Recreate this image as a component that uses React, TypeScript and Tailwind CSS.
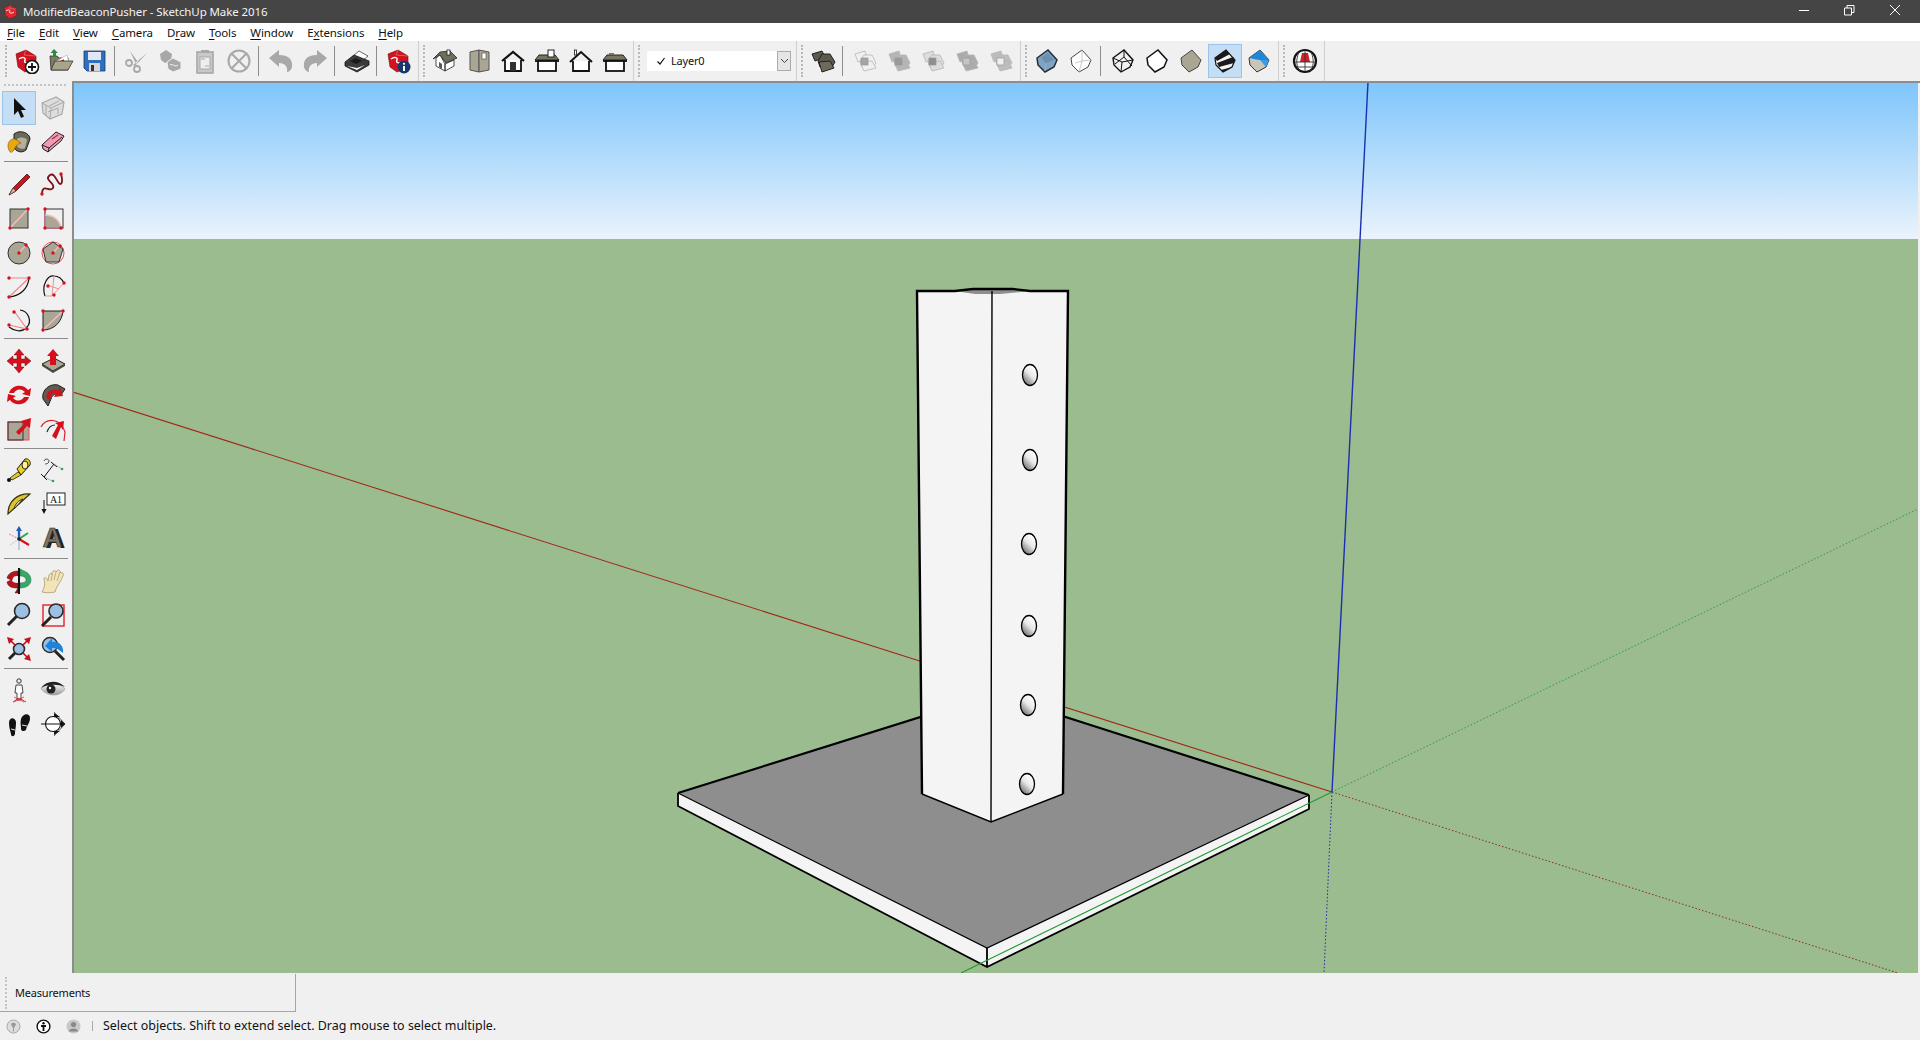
import type { ReactNode } from "react";

const RED = "#d4111e";
const TAN = "#a9a693";
const DARK = "#2b2b28";
const GREY = "#a8a8a8";

function Ico({ children, size = 26 }: { children: ReactNode; size?: number }) {
  return (
    <svg width={size} height={size} viewBox="0 0 26 26" fill="none">
      {children}
    </svg>
  );
}

function Dot({ x, y }: { x: number; y: number }) {
  return <circle cx={x} cy={y} r={1.7} fill={RED} />;
}

function Logo({ fill = RED }: { fill?: string }) {
  return (
    <g>
      <path d="M2 6 L12 2 L22 8 L22 19 L11 24 L4 19 Z" fill={fill} stroke="#6d0c12" strokeWidth={0.6} />
      <path d="M5 11 C9 8 12 10 11 12 C9 15 14 16 18 13" stroke="#fff" strokeWidth={1.4} />
      <path d="M12 2 L10 7 L22 8" stroke="#fff" strokeWidth={0.5} opacity={0.6} />
    </g>
  );
}

const NewIcon = () => (
  <Ico>
    <Logo />
    <circle cx={18} cy={19} r={6.5} fill="#fff" stroke="#111" strokeWidth={1.6} />
    <path d="M18 15 V23 M14 19 H22" stroke="#111" strokeWidth={1.8} />
  </Ico>
);
const InfoIcon = () => (
  <Ico>
    <Logo />
    <circle cx={18} cy={19} r={6.5} fill="#17386e" />
    <circle cx={18} cy={15.8} r={1.1} fill="#fff" />
    <path d="M18 18 V23" stroke="#fff" strokeWidth={2} />
  </Ico>
);
const OpenIcon = () => (
  <Ico>
    <path d="M2 8 L9 8 L11 10 L20 10 L20 22 L3 22 Z" fill="#7d7a62" stroke="#333" strokeWidth={0.8} />
    <path d="M8 13 L19 7 L21 15 L10 20 Z" fill="#fff" stroke="#999" strokeWidth={0.5} />
    <path d="M12 14 L16 12" stroke={RED} strokeWidth={1.4} />
    <path d="M3 22 L7 13 L25 13 L20 22 Z" fill="#a9a58a" stroke="#333" strokeWidth={0.8} />
    <path d="M6 1 L10 5 L8 5 L8 9 L5 9 L5 5 L2.5 5 Z" fill="#2d8a3e" />
  </Ico>
);
const SaveIcon = () => (
  <Ico>
    <path d="M2 3 L23 3 L23 23 L5 23 L2 20 Z" fill="#2f6fc0" stroke="#17386e" strokeWidth={0.8} />
    <rect x={6} y={4} width={13} height={8} fill="#dfe8f2" />
    <rect x={7} y={15} width={11} height={8} fill="#d5d5d5" />
    <rect x={9} y={17} width={3} height={6} fill="#333" />
  </Ico>
);
const CutIcon = () => (
  <Ico>
    <path d="M6 3 L14 14 L12 16 Z M23 5 L9 17 L11 18 Z" fill={GREY} />
    <circle cx={5} cy={15} r={3} stroke={GREY} strokeWidth={1.8} />
    <circle cx={13} cy={21} r={3} stroke={GREY} strokeWidth={1.8} />
  </Ico>
);
const CopyIcon = () => (
  <Ico>
    <path d="M2 6 L8 2 L14 6 L13 13 L7 15 L3 12 Z" fill={GREY} />
    <path d="M9 14 L15 10 L23 14 L23 21 L15 24 L10 21 Z" fill={GREY} stroke="#f0f0f0" />
    <path d="M12 17 C15 15 17 20 20 17" stroke="#f0f0f0" />
  </Ico>
);
const PasteIcon = () => (
  <Ico>
    <rect x={5} y={4} width={16} height={21} fill="#c9c9c9" stroke={GREY} strokeWidth={1.6} />
    <rect x={9} y={2} width={8} height={3} fill={GREY} />
    <rect x={8} y={9} width={10} height={12} fill="#eee" stroke={GREY} />
    <path d="M9 11 L13 11 M13 18 L17 18" stroke={GREY} />
  </Ico>
);
const EraseIcon = () => (
  <Ico>
    <circle cx={13} cy={13} r={10.5} stroke={GREY} strokeWidth={2} />
    <path d="M6 6 L20 20 M20 6 L6 20" stroke={GREY} strokeWidth={2} />
  </Ico>
);
const UndoIcon = () => (
  <Ico>
    <path d="M1 10 L11 2 L11 7 C20 7 25 11 24 19 C23 23 20 24 19 24 C20 19 17 15 11 15 L11 19 Z" fill={GREY} />
  </Ico>
);
const RedoIcon = () => (
  <Ico>
    <path d="M25 10 L15 2 L15 7 C6 7 1 11 2 19 C3 23 6 24 7 24 C6 19 9 15 15 15 L15 19 Z" fill={GREY} />
  </Ico>
);
const PrintIcon = () => (
  <Ico>
    <path d="M8 9 L15 3 L24 8 L17 14 Z" fill="#fff" stroke="#444" strokeWidth={0.8} />
    <path d="M1 14 L10 7 L25 13 L25 17 L13 24 L1 18 Z" fill="#3b3b3b" stroke="#111" strokeWidth={0.8} />
    <path d="M3 18 L13 22 L21 17 L13 20 Z" fill="#fff" />
    <path d="M6 13 L12 10 L18 13 L12 16 Z" fill="#1c1c1c" />
  </Ico>
);

const IsoHouse = () => (
  <Ico>
    <path d="M1 11 L8 4 L18 3 L25 10 L14 15 L8 7 Z" fill="#6f6d5b" stroke="#222" strokeWidth={0.8} />
    <path d="M4 10 L8 7 L13 16 L13 23 L4 18 Z M13 16 L22 12 L22 18 L13 23 Z" fill="#fff" stroke="#222" strokeWidth={0.8} />
    <path d="M7 14 L10 16 L10 21 L7 19 Z" fill="#555" />
    <rect x={15} y={2} width={3} height={5} fill="#fff" stroke="#222" strokeWidth={0.8} />
  </Ico>
);
const SideView = () => (
  <Ico>
    <path d="M4 4 L13 2 L13 24 L4 22 Z" fill={TAN} stroke="#555" />
    <path d="M13 2 L23 4 L23 22 L13 24 Z" fill={TAN} stroke="#555" />
    <rect x={16} y={5} width={4} height={6} fill="#fff" stroke="#555" strokeWidth={0.7} />
  </Ico>
);
const FrontHouse = () => (
  <Ico>
    <path d="M5 12 V23 H21 V12" stroke="#111" strokeWidth={1.8} fill="#fff" />
    <path d="M2 13 L13 4 L24 13" stroke="#111" strokeWidth={2.2} />
    <rect x={10} y={14} width={6} height={9} fill="#333" />
  </Ico>
);
const RoofTop = ({ chimney }: { chimney?: boolean }) => (
  <Ico>
    <path d="M1 12 L5 7 L21 7 L25 12 Z" fill="#77745f" stroke="#222" />
    <path d="M1 13 H25" stroke="#111" strokeWidth={1.8} />
    <rect x={4} y={13} width={18} height={10} fill="#fff" stroke="#111" strokeWidth={1.8} />
    {chimney ? (
      <rect x={14} y={2} width={6} height={7} fill="#fff" stroke="#222" />
    ) : (
      <rect x={7} y={5} width={5} height={2} fill="#77745f" />
    )}
  </Ico>
);
const BackHouse = () => (
  <Ico>
    <path d="M5 13 V23 H21 V13" fill="#fff" stroke="#111" strokeWidth={1.8} />
    <path d="M2 14 L13 4 L24 14" stroke="#111" strokeWidth={2} />
    <rect x={6.5} y={2} width={2} height={5} fill="#fff" stroke="#111" strokeWidth={0.8} />
  </Ico>
);

const OutlinerIcon = () => (
  <Ico>
    <path d="M2 6 L12 3 L15 9 L5 13 Z" fill="#5b5a4c" stroke="#222" />
    <path d="M12 6 L20 6 L25 14 L22 19 L10 19 L8 13 Z" fill="#5b5a4c" stroke="#222" />
    <path d="M9 14 L20 13 L24 20 L12 24 Z" fill="#6d6b5b" stroke="#222" />
  </Ico>
);
const Boxes = ({ fill, inner }: { fill: string; inner: string }) => (
  <Ico>
    <path d="M3 6 L13 3 L15 10 L6 14 Z" fill={fill} stroke="#b5b5b5" strokeWidth={0.8} />
    <path d="M12 7 L20 7 L24 15 L21 19 L10 19 L8 13 Z" fill={fill} stroke="#b5b5b5" strokeWidth={0.8} />
    <path d="M8 14 L20 13 L24 20 L12 23 Z" fill={fill} stroke="#b5b5b5" strokeWidth={0.8} />
    <rect x={9} y={10} width={7} height={7} fill={inner} stroke="#999" strokeWidth={0.7} />
  </Ico>
);

const cubeOuter = "M3 10 L14 2 L23 12 L20 19 L11 24 L4 17 Z";
const XrayCube = () => (
  <Ico>
    <path d={cubeOuter} fill="#7fa3c0" stroke="#1f2f3d" strokeWidth={1.5} />
    <path d="M7 10 L14 5 L20 12 L12 15 Z" fill="#6b90ad" />
    <path d="M12 15 L11 23" stroke="#8fb0c8" />
  </Ico>
);
const BackCube = () => (
  <Ico>
    <path d={cubeOuter} fill="#fff" stroke="#444" strokeWidth={1} />
    <path d="M7 15 L14 13 L23 12 M14 13 L14 2 M14 13 L11 24" stroke="#bbb" strokeWidth={0.8} />
  </Ico>
);
const WireCube = () => (
  <Ico>
    <path d={cubeOuter} stroke="#111" strokeWidth={1.4} />
    <path d="M3 10 L12 14 L23 12 M12 14 L11 24 M5 16 L14 9 L22 18 M14 2 L14 9" stroke="#111" strokeWidth={1} />
  </Ico>
);
const HiddenCube = () => (
  <Ico>
    <path d={cubeOuter} fill="#fff" stroke="#111" strokeWidth={1.5} />
  </Ico>
);
const ShadedCube = () => (
  <Ico>
    <path d={cubeOuter} fill={TAN} stroke="#444" strokeWidth={1} />
  </Ico>
);
const TexturedCube = () => (
  <Ico>
    <path d={cubeOuter} fill="#f4f4f4" stroke="#111" strokeWidth={1.2} />
    <path d="M3 10 L14 2 L18 6 L5 13 Z M5 15 L21 9 L23 12 L22 15 L7 19 Z M9 22 L20 19 L11 24 Z" fill="#1a1a1a" />
  </Ico>
);
const MonoCube = () => (
  <Ico>
    <path d={cubeOuter} fill="#c8c6b8" stroke="#333" strokeWidth={1} />
    <path d="M3 10 L14 2 L23 12 L13 12 Z" fill="#1f86d9" />
    <path d="M14 12 L23 12 L20 19 Z" fill="#3a9be6" />
  </Ico>
);
const GlobeIcon = () => (
  <Ico>
    <circle cx={13} cy={13} r={11} fill="#fff" stroke="#111" strokeWidth={2.2} />
    <path d="M10 5 L16 5 L18 14 L8 14 Z" fill="#d21f2d" />
    <path d="M2 14 H24 M3 19 H23 M13 2 V24 M7 4 C3 13 5 20 8 23 M19 4 C23 13 21 20 18 23" stroke="#333" strokeWidth={0.9} />
  </Ico>
);

const SelectIcon = () => (
  <Ico>
    <path d="M8 3 L8 20 L12 16 L15 23 L18 21.5 L15 15 L20 15 Z" fill="#111" />
  </Ico>
);
const ComponentIcon = () => (
  <Ico>
    <path d="M2 8 L16 2 L24 7 L22 19 L10 24 L3 18 Z" fill="#ddd" stroke="#aaa" strokeWidth={1.2} />
    <path d="M2 8 L11 13 L24 7 M11 13 L10 24 M6 10 L6 20 M9 11 L19 6 M8 17 L18 13 L18 19" stroke="#aaa" />
  </Ico>
);
const PaintIcon = () => (
  <Ico>
    <path d="M8 5 C14 0 24 4 24 10 L20 21 C15 25 9 22 8 18 Z" fill="#6b6a58" stroke="#222" />
    <path d="M11 10 C15 7 20 9 21 11 L19 19 C15 21 12 19 11 17 Z" fill="#b5b09b" />
    <path d="M3 21 C0 15 4 9 9 10 L15 14 C11 15 9 18 8 21 C6 24 4 24 3 21 Z" fill="#eba80c" stroke="#7a5500" strokeWidth={0.6} />
  </Ico>
);
const EraserIcon = () => (
  <Ico>
    <path d="M2 16 L16 3 L24 7 L21 12 L8 23 L3 20 Z" fill="#f09ab5" stroke="#222" />
    <path d="M2 16 L9 19 L8 23 M9 19 L22 8" stroke="#222" />
    <path d="M12 10 L18 6" stroke="#a33" strokeWidth={1.4} />
  </Ico>
);
const PencilIcon = () => (
  <Ico>
    <path d="M7 17 L21 3 L24 6 L10 20 L3 24 Z" fill="#c51722" stroke="#4a0b0f" strokeWidth={0.8} />
    <path d="M3 24 L7 17 L10 20 Z" fill="#c7b89a" stroke="#333" strokeWidth={0.6} />
  </Ico>
);
const FreehandIcon = () => (
  <Ico>
    <path d="M2 22 C3 12 10 22 13 17 C16 12 3 9 10 4 C15 1 17 12 20 13 C24 13 21 3 21 3" stroke="#7d0f18" strokeWidth={1.8} />
    <Dot x={2} y={23} />
    <Dot x={21} y={3} />
  </Ico>
);
const RectIcon = () => (
  <Ico>
    <rect x={4} y={4} width={18} height={19} fill={TAN} stroke="#333" />
    <path d="M4 23 L22 4" stroke="#f6b9bd" strokeWidth={1.6} />
    <Dot x={4} y={23} />
    <Dot x={22} y={4} />
  </Ico>
);
const RotRectIcon = () => (
  <Ico>
    <rect x={5} y={4} width={18} height={19} fill="#f0f0f0" stroke="#333" />
    <path d="M5 10 C14 10 20 16 21 23 L5 23 Z" fill={TAN} />
    <path d="M5 4 V23 H22" stroke="#f28" strokeWidth={0.6} />
    <path d="M5 10 C14 10 20 16 21 23" stroke="#f6b9bd" strokeWidth={1.4} />
    <Dot x={5} y={4} />
    <Dot x={5} y={23} />
    <Dot x={21} y={23} />
  </Ico>
);
const CircleIcon = () => (
  <Ico>
    <circle cx={13} cy={14} r={11} fill={TAN} stroke="#333" />
    <path d="M13 14 L20 6" stroke="#f6b9bd" strokeWidth={1.5} />
    <Dot x={13} y={14} />
    <Dot x={20} y={6} />
  </Ico>
);
const PolyIcon = () => (
  <Ico>
    <circle cx={13} cy={14} r={11} stroke="#e6515e" />
    <path d="M13 3 L23 10 L19 23 L6 23 L3 10 Z" fill={TAN} stroke="#333" />
    <path d="M13 14 L20 6" stroke="#f6b9bd" strokeWidth={1.5} />
    <Dot x={13} y={14} />
    <Dot x={20} y={7} />
  </Ico>
);
const ArcIcon = () => (
  <Ico>
    <path d="M3 24 C14 23 22 16 23 5" stroke="#111" strokeWidth={1.2} />
    <path d="M3 5 H23 L3 24" stroke="#e88" strokeWidth={1.2} />
    <Dot x={3} y={5} />
    <Dot x={23} y={5} />
    <Dot x={3} y={24} />
  </Ico>
);
const Arc2Icon = () => (
  <Ico>
    <path d="M5 23 C1 12 8 2 14 3 C19 3 22 6 24 10" stroke="#111" strokeWidth={1.2} />
    <path d="M5 23 L12 23 L24 10 M14 3 L12 23 M10 13 L19 16" stroke="#e88" strokeWidth={0.9} />
    <Dot x={24} y={10} />
    <Dot x={14} y={22} />
    <Dot x={8} y={13} />
  </Ico>
);
const Arc3Icon = () => (
  <Ico>
    <path d="M14 3 C23 4 26 15 21 20 C16 26 8 24 3 20" stroke="#111" strokeWidth={1.2} />
    <path d="M8 4 L21 22 L3 18" stroke="#e88" strokeWidth={1.2} />
    <Dot x={8} y={5} />
    <Dot x={3} y={18} />
    <Dot x={21} y={22} />
  </Ico>
);
const PieIcon = () => (
  <Ico>
    <path d="M3 4 H23 C22 15 14 23 3 23 Z" fill="#a9a693" stroke="#222" />
    <path d="M3 23 L23 4" stroke="#f6b9bd" strokeWidth={1.6} />
    <Dot x={3} y={4} />
    <Dot x={23} y={4} />
    <Dot x={3} y={23} />
  </Ico>
);
const MoveIcon = () => (
  <Ico>
    <path d="M13 1 L18 7 L15 7 L15 11 L19 11 L19 8 L25 13 L19 18 L19 15 L15 15 L15 19 L18 19 L13 25 L8 19 L11 19 L11 15 L7 15 L7 18 L1 13 L7 8 L7 11 L11 11 L11 7 L8 7 Z" fill="#d5101c" stroke="#7a0a12" strokeWidth={0.5} />
  </Ico>
);
const PushIcon = () => (
  <Ico>
    <path d="M2 16 L14 10 L25 16 L13 23 Z" fill={TAN} stroke="#222" />
    <path d="M2 16 V18 L13 25 L25 18 V16 L13 23 Z" fill="#4a4a40" />
    <path d="M13 1 L19 8 L16 8 L16 17 L10 17 L10 8 L7 8 Z" fill="#d5101c" />
  </Ico>
);
const RotateIcon = () => (
  <Ico>
    <path d="M3 11 C5 3 17 1 22 8 L25 6 L24 14 L16 12 L19 10 C15 6 10 7 8 11 Z" fill="#d5101c" />
    <path d="M23 15 C21 23 9 25 4 18 L1 20 L2 12 L10 14 L7 16 C11 20 16 19 18 15 Z" fill="#d5101c" />
  </Ico>
);
const FollowIcon = () => (
  <Ico>
    <path d="M3 17 C1 8 10 1 18 3 L25 7 L21 13 C16 10 12 13 11 17 L8 24 Z" fill="#5e5d50" stroke="#222" />
    <path d="M6 15 C7 9 12 6 18 8 L20 5 L23 14 L14 15 L16 11 C12 11 10 14 10 19 Z" fill="#c91520" />
  </Ico>
);
const ScaleIcon = () => (
  <Ico>
    <rect x={2} y={6} width={21} height={18} fill={TAN} stroke="#e6515e" />
    <rect x={2} y={6} width={15} height={18} stroke="#333" />
    <path d="M10 16 L18 8 L15 5 L25 2 L24 12 L21 10 L13 19 Z" fill="#d5101c" />
  </Ico>
);
const OffsetIcon = () => (
  <Ico>
    <path d="M1 11 C6 2 20 1 25 16 L24 25" stroke="#e02030" strokeWidth={1.2} />
    <path d="M7 16 C9 10 13 9 15 9" stroke="#333" strokeWidth={1.2} />
    <path d="M12 20 L18 9 L15 7 L24 5 L23 14 L21 11 L16 23 Z" fill="#d5101c" />
  </Ico>
);
const TapeIcon = () => (
  <Ico>
    <path d="M11 12 L19 2 C23 1 25 5 24 8 L15 18 Z" fill="#e9cf1f" stroke="#222" />
    <ellipse cx={19} cy={8} rx={3} ry={4} fill="#fff3a0" stroke="#222" />
    <path d="M12 15 L4 21 L6 23 L15 18 Z" fill="#e4c81b" stroke="#222" strokeWidth={0.8} />
    <circle cx={3} cy={23} r={2} fill="#111" />
  </Ico>
);
const DimIcon = () => (
  <Ico>
    <path d="M4 20 L14 7 M11 5 L17 10 M1 17 L7 23" stroke="#111" />
    <path d="M14 7 L22 12 M5 20 L12 24" stroke="#888" strokeWidth={0.6} />
    <circle cx={22} cy={12} r={1.3} fill="#2aa84a" />
    <circle cx={13} cy={24} r={1.3} fill="#2aa84a" />
    <path d="M4 4 C5 1 9 2 9 4 C9 7 5 7 5 7" stroke="#333" strokeWidth={0.9} />
  </Ico>
);
const ProtractorIcon = () => (
  <Ico>
    <path d="M2 23 C2 10 12 2 24 3 L2 23 Z" fill="#dcc332" stroke="#33300a" strokeWidth={1.2} />
    <path d="M8 18 C9 13 13 9 17 8 Z" fill="#f0f0f0" stroke="#33300a" />
  </Ico>
);
const LabelIcon = () => (
  <Ico>
    <rect x={7} y={2} width={18} height={12} fill="#fff" stroke="#222" />
    <text x={16} y={11.5} fontSize={10} textAnchor="middle" fill="#111" fontFamily="Liberation Serif, serif">
      A1
    </text>
    <path d="M4 9 V21" stroke="#111" />
    <path d="M1.5 18 H6.5 L4 23 Z" fill="#111" />
  </Ico>
);
const AxesIcon = () => (
  <Ico>
    <path d="M13 14 L13 3" stroke="#1f5fb4" strokeWidth={2.4} />
    <path d="M13 1 L16 6 L10 6 Z" fill="#1f5fb4" />
    <path d="M13 14 L13 25" stroke="#b9cbe0" strokeWidth={2} />
    <path d="M13 14 L22 8" stroke="#2aa84a" strokeWidth={2} />
    <path d="M13 14 L4 20" stroke="#bde0c5" strokeWidth={1.4} strokeDasharray="2 1" />
    <path d="M13 14 L23 20" stroke="#d5101c" strokeWidth={2.2} />
    <path d="M13 14 L3 9" stroke="#e99" strokeWidth={1.2} strokeDasharray="2 1" />
    <circle cx={13} cy={14} r={1.8} fill="#222" />
  </Ico>
);
const Text3DIcon = () => (
  <Ico size={31}>
    <text x={14.5} y={21} fontSize={23} fontWeight={700} textAnchor="middle" fill="#222" fontFamily="Liberation Sans, sans-serif">
      A
    </text>
    <text x={12} y={20} fontSize={23} fontWeight={700} textAnchor="middle" fill="#77766a" stroke="#222" strokeWidth={0.5} fontFamily="Liberation Sans, sans-serif">
      A
    </text>
  </Ico>
);
const OrbitIcon = () => (
  <Ico>
    <path d="M12 3 C6 3 2 6 1 10 L5 12 L1 14 C2 19 6 20 12 20 L9 25 L12 25 Z" fill="#b3141d" stroke="#5c0a0f" strokeWidth={0.5} />
    <path d="M7 10 C8 8 10 8 12 8 L12 15 C9 15 7 14 6 13 Z" fill="#f0f0f0" />
    <path d="M14 3 L14 1 L20 4 C24 6 25 10 25 12 C25 17 20 20 14 20 L14 15 C18 15 20 14 20 12 C20 10 18 8 14 8 Z" fill="#39a866" stroke="#1d6b3d" strokeWidth={0.5} />
    <path d="M13 0 V26" stroke="#111" strokeWidth={2} />
  </Ico>
);
const HandIcon = () => (
  <Ico>
    <path d="M2 24 C5 19 5 15 4 11 C4 9 6 9 7 11 L8 13 L9 7 C10 5 12 5 12 7 L12 5 C13 2 15 2 16 4 L17 3 C18 1 20 2 20 4 L21 5 C23 4 24 6 23 8 L20 14 C18 17 16 20 15 24 C10 25 6 25 2 24 Z" fill="#f2e4b8" stroke="#a89a6c" strokeWidth={0.8} />
    <path d="M12 7 L11 13 M16 4 L14 12 M20 4 L17 13" stroke="#a89a6c" strokeWidth={0.7} />
  </Ico>
);
const Lens = ({ x = 16, y = 9, r = 6.5 }: { x?: number; y?: number; r?: number }) => (
  <circle cx={x} cy={y} r={r} fill="#9dbfe4" stroke={DARK} strokeWidth={1.6} />
);
const ZoomIcon = () => (
  <Ico>
    <path d="M11 14 L2 23" stroke="#222" strokeWidth={3} />
    <Lens x={16} y={9} r={7.5} />
  </Ico>
);
const ZoomWinIcon = () => (
  <Ico>
    <rect x={3} y={3} width={21} height={21} stroke="#e0202e" strokeWidth={1.4} />
    <path d="M11 15 L2 24" stroke="#222" strokeWidth={3} />
    <Lens x={16} y={9} r={7} />
  </Ico>
);
const ZoomExtIcon = () => (
  <Ico>
    <path d="M10 16 L3 23" stroke="#222" strokeWidth={3} />
    <Lens x={13} y={13} r={5.5} />
    <path d="M1 1 L8 3 L3 8 Z M25 1 L18 3 L23 8 Z M25 25 L18 23 L23 18 Z" fill="#c5101c" />
    <path d="M3 3 L9 9 M23 3 L17 9 M23 23 L17 17" stroke="#c5101c" strokeWidth={1.6} />
  </Ico>
);
const ZoomPrevIcon = () => (
  <Ico>
    <circle cx={10} cy={9} r={7.5} fill="#9dbfe4" stroke={DARK} strokeWidth={1.4} />
    <path d="M5 10 L12 2 L12 6 C19 5 24 10 23 17 L19 14 C17 12 14 12 12 12 L12 16 Z" fill="#1d84dc" />
    <path d="M15 15 L24 24" stroke="#222" strokeWidth={3} />
  </Ico>
);
const WalkerIcon = () => (
  <Ico>
    <circle cx={13} cy={4} r={2.2} stroke="#333" />
    <path d="M10 8 H16 L17 16 L15 16 L15 23 H11 L11 16 L9 16 Z" fill="#fff" stroke="#333" strokeWidth={0.9} />
    <path d="M7 25 L13 21 L20 25" stroke="#e0202e" />
    <path d="M8 20 L18 25 M18 20 L8 25" stroke="#e0202e" strokeWidth={0.7} />
  </Ico>
);
const EyeIcon = () => (
  <Ico>
    <defs>
      <linearGradient id="eyeg" x1="0" y1="0" x2="0" y2="1">
        <stop offset="0" stopColor="#fff" />
        <stop offset="1" stopColor="#999" />
      </linearGradient>
    </defs>
    <path d="M1 12 C6 4 18 4 25 12 C20 20 8 20 1 12 Z" fill="url(#eyeg)" stroke="#999" strokeWidth={0.6} />
    <path d="M1 11 C7 3 18 3 25 10 C18 7 8 7 1 11 Z" fill="#222" />
    <circle cx={11} cy={12} r={4.5} fill="#222" />
    <circle cx={10} cy={11} r={1.2} fill="#fff" />
  </Ico>
);
const FeetIcon = () => (
  <Ico>
    <path d="M3 12 C3 6 9 6 10 11 C10 17 9 19 9 23 C8 26 5 26 5 23 C4 19 3 16 3 12 Z" fill="#111" />
    <path d="M15 8 C17 2 24 2 24 7 C24 12 21 14 20 19 C18 21 15 20 15 18 C15 14 14 12 15 8 Z" fill="#111" />
    <path d="M5 18 L9 19 M16 14 L21 15" stroke="#ddd" />
  </Ico>
);
const SectionIcon = () => (
  <Ico>
    <circle cx={13} cy={13} r={7.5} fill="#fff" stroke="#111" strokeWidth={1.1} />
    <path d="M1 13 H25" stroke="#111" />
    <path d="M14 1 L25 13 L14 25" stroke="#111" strokeWidth={0.6} />
    <path d="M14 2 L14 6 L20 6 Z M14 24 L14 20 L20 20 Z" fill="#111" />
    <path d="M21 9 L25 13 L21 17 Z" fill="#111" />
  </Ico>
);

function Btn({ children, active }: { children: ReactNode; active?: boolean }) {
  return (
    <div
      className={
        active
          ? "flex h-[34px] w-[34px] shrink-0 items-center justify-center border border-[#9cc4ea] bg-[#c3def5]"
          : "flex h-[34px] w-[34px] shrink-0 items-center justify-center"
      }
    >
      {children}
    </div>
  );
}

function Sep() {
  return <div className="ml-[2px] mr-[5px] h-[30px] w-px shrink-0 bg-[#8c8c8c]" />;
}

// end of a toolbar: light rule, then the dotted grip of the next one
function Grip() {
  return (
    <div className="flex h-full shrink-0 items-center">
      <div className="h-full w-px bg-[#cfcfcf]" />
      <div className="ml-[4px] mr-[3px] h-[32px] border-l-2 border-dotted border-[#b9b9b9]" />
    </div>
  );
}

function Row({ a, b, active }: { a: ReactNode; b: ReactNode; active?: boolean }) {
  return (
    <div className="flex h-[34px] pl-[2px]">
      <Btn active={active}>{a}</Btn>
      <Btn>{b}</Btn>
    </div>
  );
}

function Rule({ className }: { className: string }) {
  return <div className={`ml-[4px] h-px w-[64px] bg-[#8c8c8c] ${className}`} />;
}

const menus: [string, string, string][] = [
  ["", "F", "ile"],
  ["", "E", "dit"],
  ["", "V", "iew"],
  ["", "C", "amera"],
  ["D", "r", "aw"],
  ["", "T", "ools"],
  ["", "W", "indow"],
  ["E", "x", "tensions"],
  ["", "H", "elp"],
];

export default function App() {
  return (
    <div className="flex h-[1040px] w-[1920px] flex-col overflow-hidden bg-[#f0f0f0] font-['Noto_Sans',sans-serif] text-[#111]">
      {/* title bar */}
      <div className="flex h-[23px] shrink-0 items-center bg-[#454545] pl-[3px] text-[#f2f2f2]">
        <svg width={16} height={16} viewBox="0 0 26 26" fill="none">
          <Logo fill="#e0252f" />
        </svg>
        <span className="ml-[4px] text-[11.5px] tracking-[-0.1px]">ModifiedBeaconPusher - SketchUp Make 2016</span>
        <div className="ml-auto flex h-full items-center pr-[20px]">
          <svg width={130} height={23} viewBox="0 0 130 23" fill="none" stroke="#fff">
            <path d="M29 10.5 H39" />
            <path d="M74.5 8 H81.5 V15 H74.5 Z M77 8 V5.5 H84 V12.5 H81.5" />
            <path d="M120 5 L130 15 M130 5 L120 15" />
          </svg>
        </div>
      </div>

      {/* menu bar */}
      <div className="flex h-[18px] shrink-0 items-center gap-[14px] bg-white pl-[7px] pt-px text-[11.5px] tracking-[-0.12px]">
        {menus.map(([before, key, after]) => (
          <span key={before + key + after}>
            {before}
            <span className="underline underline-offset-2">{key}</span>
            {after}
          </span>
        ))}
      </div>

      {/* main toolbar */}
      <div className="flex h-[40px] shrink-0 items-center">
        <div className="ml-[5px] h-[32px] border-l-2 border-dotted border-[#b9b9b9]" />
        <div className="ml-[3px] flex items-center">
          <Btn><NewIcon /></Btn>
          <Btn><OpenIcon /></Btn>
          <Btn><SaveIcon /></Btn>
          <Sep />
          <Btn><CutIcon /></Btn>
          <Btn><CopyIcon /></Btn>
          <Btn><PasteIcon /></Btn>
          <Btn><EraseIcon /></Btn>
          <Sep />
          <Btn><UndoIcon /></Btn>
          <Btn><RedoIcon /></Btn>
          <Sep />
          <Btn><PrintIcon /></Btn>
          <Sep />
          <Btn><InfoIcon /></Btn>
        </div>
        <div className="ml-[2px] flex h-full items-center">
          <Grip />
          <Btn><IsoHouse /></Btn>
          <Btn><SideView /></Btn>
          <Btn><FrontHouse /></Btn>
          <Btn><RoofTop chimney /></Btn>
          <Btn><BackHouse /></Btn>
          <Btn><RoofTop /></Btn>
          <div className="w-px" />
          <Grip />
          <div className="w-[4px]" />
          {/* layer select */}
          <div className="flex h-[20px] w-[144px] items-center bg-white pl-[9px] text-[11px] tracking-[-0.2px]">
            <svg width={10} height={10} viewBox="0 0 10 10" fill="none" stroke="#111" strokeWidth={1.2}>
              <path d="M1.5 5.5 L4 8 L8.5 2" />
            </svg>
            <span className="ml-[5px]">Layer0</span>
            <div className="ml-auto flex h-[20px] w-[14px] items-center justify-center border border-[#acacac] bg-[#e5e5e5]">
              <svg width={9} height={6} viewBox="0 0 9 6" fill="none" stroke="#444">
                <path d="M1 1 L4.5 4.5 L8 1" />
              </svg>
            </div>
          </div>
          <div className="w-[5px]" />
          <Grip />
          <Btn><OutlinerIcon /></Btn>
          <Sep />
          <Btn><Boxes fill="#f0f0f0" inner="#a5a5a5" /></Btn>
          <Btn><Boxes fill="#b5b5b5" inner="#9a9a9a" /></Btn>
          <Btn><Boxes fill="#dcdcdc" inner="#8f8f8f" /></Btn>
          <Btn><Boxes fill="#ababab" inner="#c4c4c4" /></Btn>
          <Btn><Boxes fill="#bdbdbd" inner="#efefef" /></Btn>
          <div className="w-[2px]" />
          <Grip />
          <Btn><XrayCube /></Btn>
          <Btn><BackCube /></Btn>
          <Sep />
          <Btn><WireCube /></Btn>
          <Btn><HiddenCube /></Btn>
          <Btn><ShadedCube /></Btn>
          <Btn active><TexturedCube /></Btn>
          <Btn><MonoCube /></Btn>
          <div className="w-[2px]" />
          <Grip />
          <Btn><GlobeIcon /></Btn>
          <div className="w-[2px]" />
          <div className="h-full w-px bg-[#cfcfcf]" />
        </div>
      </div>

      {/* work area */}
      <div className="flex h-[892px] shrink-0">
        <div className="flex w-[72px] shrink-0 flex-col">
          <div className="mx-[4px] mt-[3px] h-[3px] w-[62px] border-t-2 border-dotted border-[#c4c4c4]" />
          <div className="mt-[4px]" />
          <Row a={<SelectIcon />} b={<ComponentIcon />} active />
          <Row a={<PaintIcon />} b={<EraserIcon />} />
          <Rule className="mt-[2px] mb-[5px]" />
          <Row a={<PencilIcon />} b={<FreehandIcon />} />
          <Row a={<RectIcon />} b={<RotRectIcon />} />
          <Row a={<CircleIcon />} b={<PolyIcon />} />
          <Row a={<ArcIcon />} b={<Arc2Icon />} />
          <Row a={<Arc3Icon />} b={<PieIcon />} />
          <Rule className="mt-[1px] mb-[5px]" />
          <Row a={<MoveIcon />} b={<PushIcon />} />
          <Row a={<RotateIcon />} b={<FollowIcon />} />
          <Row a={<ScaleIcon />} b={<OffsetIcon />} />
          <Rule className="mt-[2px] mb-[4px]" />
          <Row a={<TapeIcon />} b={<DimIcon />} />
          <Row a={<ProtractorIcon />} b={<LabelIcon />} />
          <Row a={<AxesIcon />} b={<Text3DIcon />} />
          <Rule className="mt-[3px] mb-[5px]" />
          <Row a={<OrbitIcon />} b={<HandIcon />} />
          <Row a={<ZoomIcon />} b={<ZoomWinIcon />} />
          <Row a={<ZoomExtIcon />} b={<ZoomPrevIcon />} />
          <Rule className="mt-[2px] mb-[4px]" />
          <Row a={<WalkerIcon />} b={<EyeIcon />} />
          <Row a={<FeetIcon />} b={<SectionIcon />} />
        </div>
        <div className="flex min-w-0 flex-1 flex-col">
          <div className="h-[2px] w-full bg-[#8d8d8d]" />
          <div className="flex">
            <div className="w-[2px] bg-[#8d8d8d]" />
            <svg width={1844} height={890} viewBox="74 83 1844 890" fill="none" className="block">
              <defs>
                <linearGradient id="sky" x1="0" y1="0" x2="0" y2="1">
                  <stop offset="0" stopColor="#7fc6fb" />
                  <stop offset="1" stopColor="#eaf3fb" />
                </linearGradient>
                <linearGradient id="hole" x1="0.15" y1="0.9" x2="0.7" y2="0.1">
                  <stop offset="0" stopColor="#6e6e6e" />
                  <stop offset="0.55" stopColor="#e8e8e8" />
                  <stop offset="1" stopColor="#fff" />
                </linearGradient>
              </defs>
              <rect x={74} y={83} width={1844} height={156} fill="url(#sky)" />
              <rect x={74} y={239} width={1844} height={734} fill="#9bbc8f" />

              {/* dotted axes */}
              <path d="M1332 792 L1898 973" stroke="#8c2a1a" strokeDasharray="1.5 2" />
              <path d="M1332 792 L1920 508" stroke="#2f9a3c" strokeDasharray="1.5 2" />
              <path d="M1332 792 L1324 973" stroke="#1b2f9c" strokeDasharray="1.5 2" />

              <path d="M73 392 L1332 792" stroke="#a3261a" strokeWidth={1.1} />

              {/* base plate */}
              <path d="M678 793 L994 694 L1309 795 L987 948 Z" fill="#8e8e8e" />
              <path d="M678 793 L987 948 L987 967 L678 806 Z" fill="#f4f4f4" />
              <path d="M987 948 L1309 795 L1309 809 L987 967 Z" fill="#f4f4f4" />
              <path d="M678 793 L994 694 L1309 795" stroke="#000" strokeWidth={2.2} />
              <path d="M678 793 L987 948 L1309 795" stroke="#000" strokeWidth={1.2} />
              <path d="M678 793 V806 L987 967 L1309 809 V795 M987 948 V967" stroke="#000" strokeWidth={1.8} />

              <path d="M1332 792 L961 973" stroke="#1f9a2e" strokeWidth={1.1} />
              <path d="M1332 792 L1368 82" stroke="#1c2fb0" strokeWidth={1.4} />

              {/* tower */}
              <path d="M917 291 L1068 291 L1063 794 L991 822 L922 794 Z" fill="#f4f4f4" />
              <path d="M958 291.5 L973 290 H1013 L1027 291.5 L1000 294 H975 Z" fill="#8e8e8e" />
              <path d="M922 794 L917 291 H955 L973 289 H1013 L1030 291 H1068 L1063 794" stroke="#000" strokeWidth={2.4} />
              <path d="M922 794 L991 822 L1063 794 M992 291 L991 822" stroke="#000" strokeWidth={1.4} />
              {[375, 460, 544, 626, 705, 784].map((cy, i) => (
                <ellipse
                  key={cy}
                  cx={1030 - (i > 1 ? 1 : 0) - (i > 3 ? 1 : 0) - (i > 4 ? 1 : 0)}
                  cy={cy}
                  rx={7.5}
                  ry={10.5}
                  fill="url(#hole)"
                  stroke="#000"
                  strokeWidth={1.3}
                />
              ))}
            </svg>
          </div>
        </div>
      </div>

      {/* measurements */}
      <div className="mt-px flex h-[38px] w-[296px] shrink-0 items-center border-r border-b border-[#a5a5a5] pl-[5px] text-[11px] tracking-[-0.2px]">
        <div className="h-[32px] border-l-2 border-dotted border-[#c4c4c4]" />
        <span className="ml-[8px] pt-[2px]">Measurements</span>
      </div>

      {/* status bar */}
      <div className="flex h-[28px] shrink-0 items-center pl-[6px] text-[12.45px]">
        <svg width={15} height={15} viewBox="0 0 15 15">
          <circle cx={7.5} cy={7.5} r={6.5} fill="#ddd" stroke="#aaa" />
          <path d="M5 5.5 C5 3 10 3 10 5.5 L8 9 V12.5 H7 V9 Z" fill="#999" />
        </svg>
        <svg width={15} height={15} viewBox="0 0 15 15" className="ml-[15px]">
          <circle cx={7.5} cy={7.5} r={6.4} fill="#fff" stroke="#111" strokeWidth={1.4} />
          <circle cx={7.5} cy={4.3} r={1.2} fill="#111" />
          <path d="M5 7 H10 M7.5 6.5 V12" stroke="#111" strokeWidth={1.8} />
        </svg>
        <svg width={15} height={15} viewBox="0 0 15 15" className="ml-[15px]">
          <circle cx={7.5} cy={7.5} r={7} fill="#c8c8c8" />
          <circle cx={7.5} cy={5.5} r={2.6} fill="#888" />
          <path d="M2.8 12.5 C3.5 8.5 11.5 8.5 12.2 12.5 Z" fill="#888" />
        </svg>
        <div className="ml-[11px] h-[10px] w-px bg-[#aaa]" />
        <span className="ml-[10px]">Select objects. Shift to extend select. Drag mouse to select multiple.</span>
      </div>
    </div>
  );
}
